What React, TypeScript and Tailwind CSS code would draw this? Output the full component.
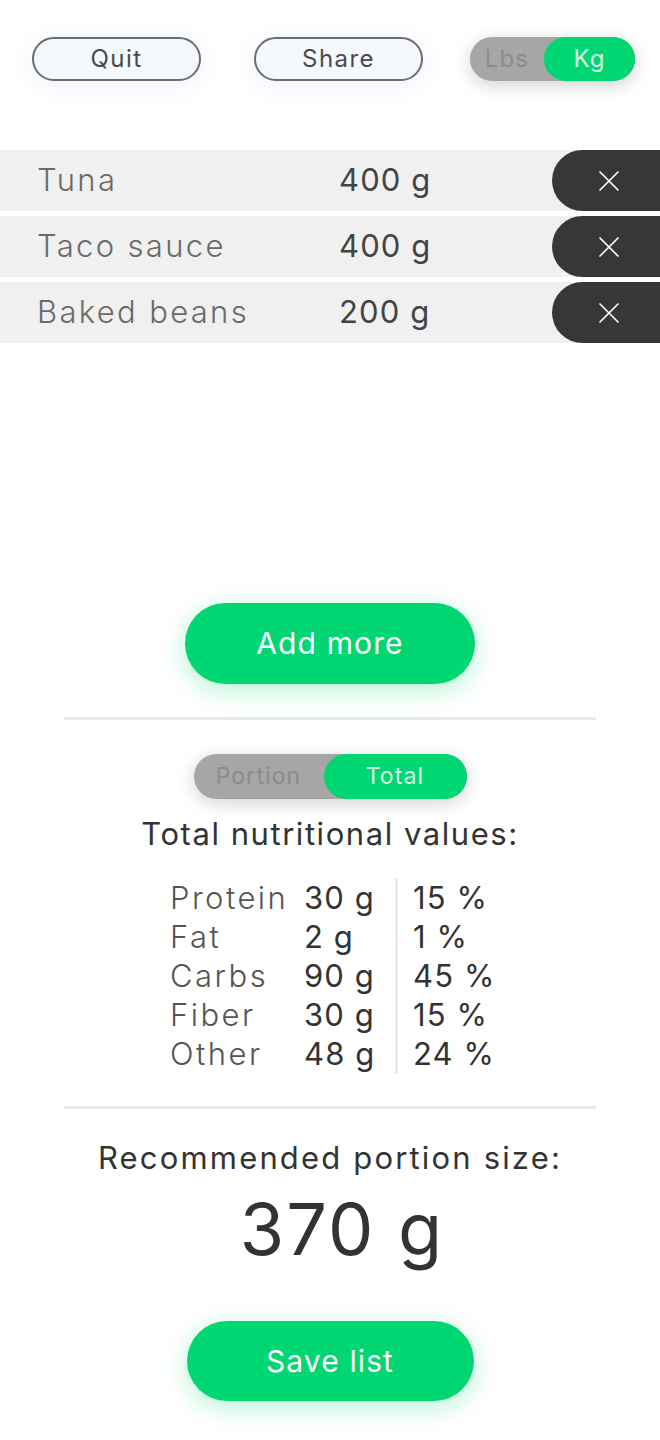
import { X } from "lucide-react";

const items = [
  { name: "Tuna", amount: "400 g" },
  { name: "Taco sauce", amount: "400 g" },
  { name: "Baked beans", amount: "200 g" },
];

const nutrients = [
  { label: "Protein", grams: "30 g", pct: "15 %" },
  { label: "Fat", grams: "2 g", pct: "1 %" },
  { label: "Carbs", grams: "90 g", pct: "45 %" },
  { label: "Fiber", grams: "30 g", pct: "15 %" },
  { label: "Other", grams: "48 g", pct: "24 %" },
];

export default function App() {
  return (
    <div className="min-h-screen w-[660px] bg-white font-['Inter',sans-serif] tracking-[0.07em] text-[#333]">
      {/* top bar */}
      <div className="flex items-center pt-[37px] pl-[32px]">
        <button className="h-[44px] w-[169px] rounded-full border-[2.5px] border-[#6c6c6c] bg-[#f5f8fd] text-[24px] tracking-[0.06em] text-[#4a4a4a] shadow-[0_4px_24px_rgba(200,215,240,0.35)]">
          Quit
        </button>
        <button className="ml-[53px] h-[44px] w-[169px] rounded-full border-[2.5px] border-[#6c6c6c] bg-[#f5f8fd] text-[24px] tracking-[0.06em] text-[#4a4a4a] shadow-[0_4px_24px_rgba(200,215,240,0.35)]">
          Share
        </button>
        <div className="ml-[47px] flex h-[44px] w-[165px] items-center rounded-full bg-[#a6a6a6] shadow-[0_4px_18px_rgba(0,0,0,0.18)]">
          <span className="flex-1 text-center text-[24px] text-[#8c8c8c]">Lbs</span>
          <span className="flex h-full w-[91px] items-center justify-center rounded-full bg-[#00d672] text-[24px] text-[#d8f6e2]">
            Kg
          </span>
        </div>
      </div>

      {/* item list */}
      <div className="mt-[69px] flex flex-col gap-[5px]">
        {items.map((it) => (
          <div key={it.name} className="flex h-[61px] items-center bg-[#f0f0f0]">
            <span className="w-[339px] shrink-0 pl-[37px] text-[31px] font-light tracking-[0.075em] text-[#6a6a6a]">
              {it.name}
            </span>
            <span className="text-[31px] text-[#444]">{it.amount}</span>
            <button className="ml-auto flex h-full w-[108px] items-center justify-center rounded-l-full bg-[#373737] pl-[6px]">
              <X className="h-[36px] w-[36px] text-white" strokeWidth={1.1} />
            </button>
          </div>
        ))}
      </div>

      <div className="mt-[260px] flex justify-center">
        <button className="h-[81px] w-[290px] rounded-full bg-[#00d672] text-[30px] text-white shadow-[0_6px_26px_rgba(0,214,114,0.3)]">
          Add more
        </button>
      </div>

      <div className="mx-auto mt-[33px] h-[3px] w-[532px] bg-[#e9e9e9]" />

      {/* portion / total toggle */}
      <div className="mt-[34px] flex justify-center">
        <div className="flex h-[45px] w-[273px] items-center rounded-full bg-[#a6a6a6] shadow-[0_4px_18px_rgba(0,0,0,0.18)]">
          <span className="flex-1 text-center text-[23px] text-[#8c8c8c]">Portion</span>
          <span className="flex h-full w-[143px] items-center justify-center rounded-full bg-[#00d672] text-[23px] text-[#d8f6e2]">
            Total
          </span>
        </div>
      </div>

      <h2 className="mt-[17px] text-center text-[31px] leading-[36px] tracking-[0.05em] text-[#333]">
        Total nutritional values:
      </h2>

      <div className="mx-auto mt-[26px] flex w-[320px] whitespace-nowrap text-[31px] leading-[39px]">
        <div className="w-[134px] shrink-0 font-light tracking-[0.08em] text-[#555]">
          {nutrients.map((n) => (
            <div key={n.label}>{n.label}</div>
          ))}
        </div>
        <div className="w-[91px] shrink-0 text-[#333]">
          {nutrients.map((n) => (
            <div key={n.label}>{n.grams}</div>
          ))}
        </div>
        <div className="shrink-0 border-l-[3px] border-[#e9e9e9] pl-[15px] text-[#333]">
          {nutrients.map((n) => (
            <div key={n.label}>{n.pct}</div>
          ))}
        </div>
      </div>

      <div className="mx-auto mt-[33px] h-[3px] w-[532px] bg-[#e9e9e9]" />

      <p className="mt-[29px] text-center text-[31px] leading-[40px] tracking-[0.07em] text-[#333]">
        Recommended portion size:
      </p>
      <p className="mt-[11px] pl-[24px] text-center text-[72px] leading-[80px] tracking-[0.03em] text-[#333]">370 g</p>

      <div className="mt-[52px] flex justify-center pb-[40px]">
        <button className="h-[80px] w-[287px] rounded-full bg-[#00d672] text-[30px] text-white shadow-[0_6px_26px_rgba(0,214,114,0.3)]">
          Save list
        </button>
      </div>
    </div>
  );
}
